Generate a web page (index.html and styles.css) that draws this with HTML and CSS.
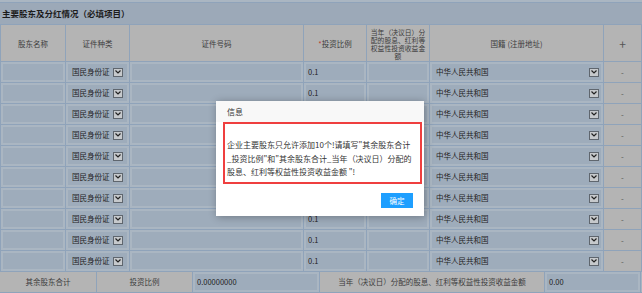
FILE: index.html
```html
<!DOCTYPE html>
<html lang="zh-CN">
<head>
    <meta charset="UTF-8">
    <meta name="viewport" content="width=device-width, initial-scale=1.0">
    <title>主要股东及分红情况</title>
    <link rel="stylesheet" href="styles.css">
</head>
<body>
    <!-- Previous table edge -->
    <div class="top-strip"></div>

    <!-- Section -->
    <div class="section-title">主要股东及分红情况（必填项目）</div>

    <table class="holders">
        <colgroup>
            <col style="width:65px">
            <col style="width:64px">
            <col style="width:174px">
            <col style="width:63px">
            <col style="width:63px">
            <col style="width:174px">
            <col style="width:38px">
        </colgroup>
        <thead>
            <tr>
                <th>股东名称</th>
                <th>证件种类</th>
                <th>证件号码</th>
                <th><span class="req">*</span>投资比例</th>
                <th class="narrow">当年（决议日）分<br>配的股息、红利等<br>权益性投资收益金<br>额</th>
                <th>国籍<span class="req-dot">*</span>(注册地址)</th>
                <th class="plus">+</th>
            </tr>
        </thead>
        <tbody id="holderRows"></tbody>
    </table>

    <!-- Totals -->
    <div class="totals">
        <div class="total-label">其余股东合计</div>
        <div class="total-label">投资比例</div>
        <div class="total-cell"><span class="field">0.00000000</span></div>
        <div class="total-label">当年（决议日）分配的股息、红利等权益性投资收益金额</div>
        <div class="total-cell"><span class="field">0.00</span></div>
    </div>
    <div class="bottom-strip"></div>

    <!-- Dialog -->
    <div class="layer">
        <div class="layer-title">信息</div>
        <div class="layer-body">
            <div class="layer-msg">
                企业主要股东只允许添加10个!请填写"其余股东合计<br>
                _投资比例"和"其余股东合计_当年（决议日）分配的<br>
                股息、红利等权益性投资收益金额 "!
            </div>
        </div>
        <div class="layer-btns">
            <a class="layer-btn" href="#">确定</a>
        </div>
    </div>

    <script>
        // Build the ten shareholder rows
        var rows = document.getElementById('holderRows');
        var arrow = '<span class="arrow"><svg width="6" height="4" viewBox="0 0 6 4"><path d="M0.5 0.5 L3 3 L5.5 0.5" fill="none" stroke="#222" stroke-width="1.2"/></svg></span>';
        for (var i = 0; i < 10; i++) {
            var tr = document.createElement('tr');
            tr.innerHTML =
                '<td><span class="field"></span></td>' +
                '<td><span class="field select id-type">国民身份证' + arrow + '</span></td>' +
                '<td><span class="field"></span></td>' +
                '<td><span class="field">0.1</span></td>' +
                '<td><span class="field"></span></td>' +
                '<td><span class="field select country">中华人民共和国' + arrow + '</span></td>' +
                '<td class="minus">-</td>';
            rows.appendChild(tr);
        }
    </script>
</body>
</html>
```

FILE: styles.css
```css
/* General Styles */
body {
    margin: 0;
    width: 642px;
    height: 293px;
    overflow: hidden;
    position: relative;
    font-family: "Noto Sans CJK SC", "DejaVu Sans", sans-serif;
    background-color: #a9b5c1;
    color: #222;
}

.top-strip {
    height: 2px;
    background-color: #aab6c2;
    border-bottom: 1px solid #8fa3ba;
}

.section-title {
    height: 21px;
    line-height: 21px;
    padding-left: 2px;
    background-color: #9ca9b8;
    font-size: 8.5px;
    font-weight: bold;
    color: #1c1c1c;
}

/* Shareholder table */
.holders {
    width: 641px;
    border-collapse: collapse;
    table-layout: fixed;
}

.holders th,
.holders td {
    border: 1px solid #8fa3ba;
    padding: 0;
}

.holders th {
    height: 35px;
    background-color: #b4b4b4;
    font-size: 7.5px;
    font-weight: normal;
    color: #3c3c3c;
    text-align: center;
}

.holders th.narrow {
    font-size: 6.8px;
    line-height: 8px;
    padding: 1px 0 0;
    white-space: nowrap;
}

.holders th.plus {
    font-size: 12px;
    color: #555;
}

.req {
    color: #c0392b;
}

.req-dot {
    color: #c9852e;
    font-size: 4px;
    vertical-align: top;
}

.holders tbody tr {
    height: 21px;
}

.holders td {
    background-color: #aab6c2;
    padding: 2px;
}

.holders td.minus {
    background-color: #b4b4b4;
    text-align: center;
    font-size: 8px;
    color: #555;
}

.field {
    display: block;
    height: 16px;
    line-height: 16px;
    padding-left: 2px;
    background-color: #9eacbb;
    font-size: 7.5px;
    color: #1e1e1e;
    white-space: nowrap;
    overflow: hidden;
}

.select {
    display: flex;
    align-items: center;
    justify-content: space-between;
    padding: 0 3px 0 4px;
}

.id-type {
    padding-right: 4px;
}

.country {
    padding-right: 2px;
}

.arrow {
    width: 10px;
    height: 9px;
    box-sizing: border-box;
    border: 1px solid #5f666e;
    background-color: #c6c9cc;
    display: flex;
    align-items: center;
    justify-content: center;
}

/* Totals row */
.totals {
    display: grid;
    grid-template-columns: 97px 96px 127px 225px 96px;
    height: 20px;
    width: 641px;
}

.total-label {
    background-color: #b4b4b4;
    border-right: 1px solid #8fa3ba;
    text-align: center;
    font-size: 7.5px;
    line-height: 20px;
    color: #3c3c3c;
}

.total-cell {
    background-color: #aab6c2;
    border-right: 1px solid #8fa3ba;
    padding: 2px;
}

.bottom-strip {
    height: 3px;
    border-top: 1px solid #8fa3ba;
    background-color: #aab6c2;
}

/* Dialog */
.layer {
    position: absolute;
    left: 216px;
    top: 101px;
    width: 208px;
    height: 115px;
    background-color: #fff;
    box-shadow: 1px 1px 8px rgba(0, 0, 0, 0.3);
}

.layer-title {
    height: 21px;
    line-height: 22px;
    padding-left: 11px;
    font-size: 8px;
    color: #333;
    background-color: #f8f8f8;
}

.layer-body {
    padding: 0 2px 0 7px;
}

.layer-msg {
    border: 2px solid #ef3f3f;
    padding: 14px 0 0 2px;
    box-sizing: border-box;
    height: 62px;
    font-size: 8px;
    line-height: 13.5px;
    color: #333;
    white-space: nowrap;
}

.layer-btns {
    display: flex;
    justify-content: flex-end;
    padding: 9px 11px 0 0;
}

.layer-btn {
    width: 32px;
    height: 15px;
    line-height: 15px;
    text-align: center;
    background-color: #1e9fff;
    color: #fff;
    font-size: 7.5px;
    text-decoration: none;
}
```
